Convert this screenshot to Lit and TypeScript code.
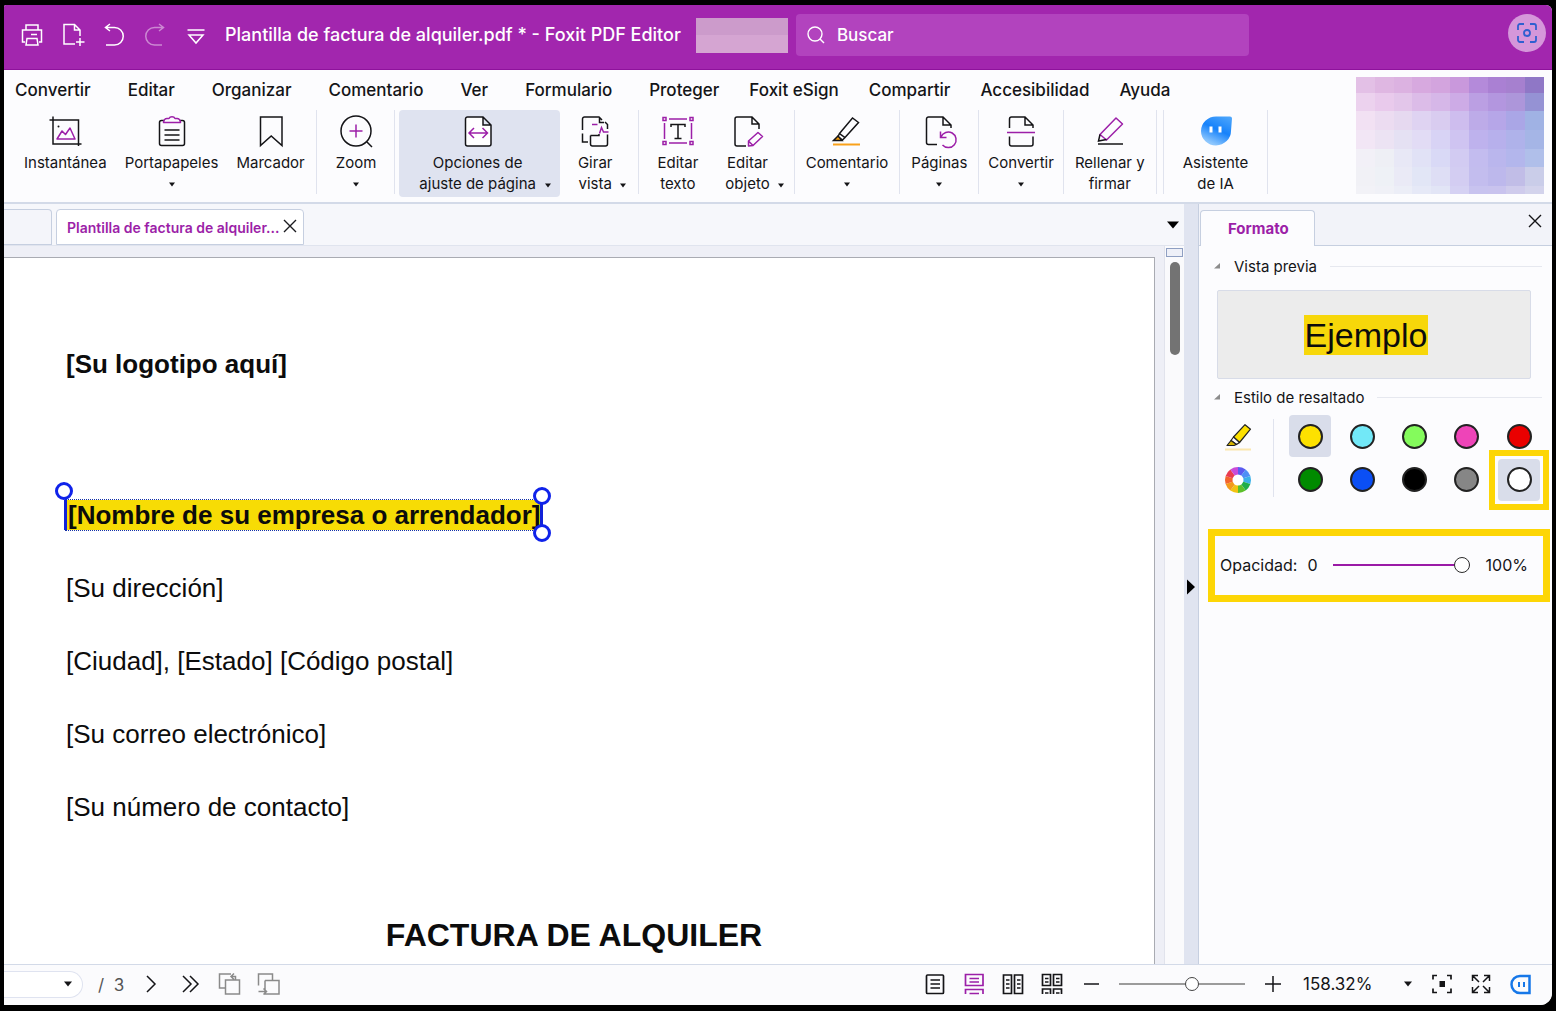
import { LitElement, html, css, svg, nothing } from "lit";
import { customElement, state } from "lit/decorators.js";
import { classMap } from "lit/directives/class-map.js";
import { styleMap } from "lit/directives/style-map.js";

const P = "#9c1fa8";

const icon = (content: unknown, size = 32) => html`<svg
  class="icon"
  width=${size}
  height=${size}
  viewBox="0 0 ${size} ${size}"
  fill="none"
  stroke="currentColor"
  stroke-width="1.5"
  aria-hidden="true"
>${content}</svg>`;

const caret = html`<svg class="caret" width="8" height="5" viewBox="0 0 8 5" aria-hidden="true"><path d="M1 .5h6L4 4.5z" fill="currentColor"/></svg>`;
const caretLarge = html`<svg class="caret" width="12" height="8" viewBox="0 0 12 8" aria-hidden="true"><path d="M0 .5h12L6 7.5z" fill="currentColor"/></svg>`;
const caretMid = html`<svg class="caret" width="8" height="6" viewBox="0 0 8 6" aria-hidden="true"><path d="M0 .5h8L4 5.5z" fill="currentColor"/></svg>`;
const cross = html`<svg width="14" height="14" viewBox="0 0 14 14" fill="none" stroke="currentColor" stroke-width="1.4" aria-hidden="true"><path d="M1 1l12 12M13 1L1 13"/></svg>`;

const quick = [
  { label: "Imprimir", art: svg`<path d="M6 7V2h12v5M5 19H2.500V7h19v12H19M7 15.500h10l1 6.500H6z M11 11.500h6"/>` },
  { label: "Nuevo", art: svg`<path d="M14 21H3V1.500h10.500L19 7v6M13.500 1.500V7H19M19 15v8M15 19h8.500"/>` },
  { label: "Deshacer", art: svg`<path d="M8 1L3.500 4.500 8 8M3.500 4.500h9a8.500 8.500 0 0 1 0 17.500H4"/>` },
  { label: "Rehacer", dim: true, art: svg`<path d="M16 1l4.500 3.500L16 8M20.500 4.500h-9a8.500 8.500 0 0 0 0 17.500H19"/>` },
  { label: "Personalizar", art: svg`<path d="M3.500 7h17M5 12h14l-7 8z"/>` },
];

const menus = ["Convertir", "Editar", "Organizar", "Comentario", "Ver", "Formulario", "Proteger", "Foxit eSign", "Compartir", "Accesibilidad", "Ayuda"];

interface Tool {
  lines: string[];
  art: unknown;
  caret?: "below" | "side";
  active?: boolean;
}

const groups: { kind: string; tools: Tool[] }[] = [
  {
    kind: "first",
    tools: [
      { lines: ["Instantánea"], art: svg`<path d="M.5 5h29v26M4 1.500V29h28.500"/><circle cx="9.500" cy="11.500" r="1" fill="currentColor" stroke="none"/><path stroke=${P} stroke-linejoin="round" d="M8 24l5-8 3.500 3.500L21 13l5 11z"/>` },
      { lines: ["Portapapeles"], caret: "below", art: svg`<path d="M8 5.500H5.500a2 2 0 0 0-2 2v21a2 2 0 0 0 2 2h21a2 2 0 0 0 2-2v-21a2 2 0 0 0-2-2H24M8.500 15h15M8.500 20h15M8.500 25h15"/><path stroke=${P} stroke-linejoin="round" d="M11 3.500h2a3.200 2.600 0 0 1 6 0h2q3 0 3.500 4H7.500q.5-4 3.500-4z"/>` },
      { lines: ["Marcador"], art: svg`<path d="M5.500 2H27v28.500l-10.800-9.500-10.700 9.500z"/>` },
    ],
  },
  { kind: "roomy", tools: [{ lines: ["Zoom"], caret: "below", art: svg`<circle cx="16" cy="16" r="15"/><path d="M27 27l5 5"/><path stroke=${P} d="M9.500 16h13M16 9.500v13"/>` }] },
  {
    kind: "tight",
    tools: [
      { lines: ["Opciones de", "ajuste de página"], caret: "side", active: true, art: svg`<path fill="#fff" d="M3.500 4a2 2 0 0 1 2-2H21l8 8v19a2 2 0 0 1-2 2H5.500a2 2 0 0 1-2-2zM21 2v8h8"/><path stroke=${P} d="M7.500 18h17M12 13l-5 5 5 5M20.500 13l5 5-5 5"/>` },
      { lines: ["Girar", "vista"], caret: "side", art: svg`<path d="M3.500 15V4a2 2 0 0 1 2-2H20l3 3M26 7l2.500 2.500V14M20.500 2v5.500H25M3.500 18.500V27H9M11.500 20.500h8.500V19M11.500 20.500V29a2 2 0 0 0 2 2h13a2 2 0 0 0 2-2V19.500"/><path stroke=${P} d="M13 9.500h5.500M20.500 18.500l2-6 2 4.500h5"/>` },
    ],
  },
  {
    kind: "wide",
    tools: [
      { lines: ["Editar", "texto"], art: svg`<path stroke=${P} d="M7 4h18M7 28h18M2.500 8v16M29.500 8v16M1 2.500h3v3H1zM28 2.500h3v3h-3zM1 26.500h3v3H1zM28 26.500h3v3h-3z"/><path d="M9 12V9.500h14V12M16 9.500v14M12.500 23.500h7"/>` },
      { lines: ["Editar", "objeto"], caret: "side", art: svg`<path d="M14 31H5a2 2 0 0 1-2-2V4a2 2 0 0 1 2-2h15l7 7v5M20 2v7h7"/><path stroke=${P} stroke-linejoin="round" d="M16.500 26L26 17.500l4.500 4-9.500 9-4.500.5zM16.500 26l4.500 4.500"/>` },
    ],
  },
  { kind: "plain", tools: [{ lines: ["Comentario"], caret: "below", art: svg`<path d="M8.500 18.500L21.500 3l6 4.500L14 22.500zM8.500 18.500L7 21.500l4.500 3.500 2.500-2.500"/><path d="M7 21l-4.500 4.500h8.500z" fill="#f59e0b"/><path d="M2 29.500h27" stroke="#f9a11b" stroke-width="2"/>` }] },
  { kind: "plain", tools: [{ lines: ["Páginas"], caret: "below", art: svg`<path d="M14 29.500H5.500a2 2 0 0 1-2-2V4a2 2 0 0 1 2-2H20l8 8v3M20 2v8h8"/><path stroke=${P} d="M17.500 16.500v6h6M18 22a7.800 7.800 0 1 1 1.500 8"/>` }] },
  { kind: "snug", tools: [{ lines: ["Convertir"], caret: "below", art: svg`<path d="M4.500 13V4a2 2 0 0 1 2-2H20l8 8v3M20 2v8h8M4.500 21.500V29a2 2 0 0 0 2 2H26a2 2 0 0 0 2-2v-7.500"/><path stroke=${P} d="M2 17.500h28"/>` }] },
  { kind: "plain", tools: [{ lines: ["Rellenar y", "firmar"], art: svg`<path stroke=${P} stroke-linejoin="round" d="M6 19.500L22 3l6.500 6L12.500 25z"/><path d="M6 19.500L4.500 26l8-1.500M4 29h25"/>` }] },
  {
    kind: "assistant",
    tools: [{ lines: ["Asistente", "de IA"], art: svg`<defs><linearGradient id="drop" x1="1" y1="0" x2="0.500" y2="1"><stop offset="0" stop-color="#52a9fb"/><stop offset=".55" stop-color="#1682fb"/><stop offset="1" stop-color="#8cc6fd"/></linearGradient></defs><path fill="url(#drop)" stroke="none" d="M16 1.500h14q2 0 2 2L31 16A15.500 14.500 0 0 1 16 30.500 15 14.500 0 0 1 1 16 15 14.500 0 0 1 16 1.500z"/><path stroke="#fff" stroke-width="3" d="M11 11.500v6M20 11.500v6"/>` }],
  },
];

const mosaicRows = [
  "e3c0e6 dfb7e2 dcb2e1 d7a9df d3a4de c998dc b48ada aa80d3 a680cf 8f77c6",
  "ecd2ee e9caec e3c6ea dcbce8 d6b7e8 cdabe6 bb9fe3 b396df ad96da 9592d4",
  "f2e1f3 ecdcf1 e6d9f0 dfd3f2 d9ccf0 cebdee bdabe8 b6a6e8 aaa6e6 a0b2e4",
  "f2e6f5 ece3f3 e5e1f3 e2dcf5 d8d3f5 cfc4f1 beb2ed b7b0ec afb2ea a5b5e6",
  "f2f0f7 eeeff5 e8e8f6 e1e2f6 d9d9f6 d2cbf2 c3bcef bab6ed b3b6ec b0bfea",
  "f1f1f6 eef1f6 eaeaf6 e2e6f6 dedef5 d3cdf2 c3bdee bdb8ec c1bde7 cacde9",
  "f2f2f7 f0f1f7 eceef7 e6e9f7 e2e5f6 d5d1f3 c8c3ef c9c3ee cfcbec d3d3ec",
].map((row) => row.split(" "));
const mosaicY = [0, 16, 34, 53, 72, 90, 109, 117];

const swatches = [
  { name: "Amarillo", color: "#fde100", on: true },
  { name: "Celeste", color: "#72e8f7" },
  { name: "Verde claro", color: "#84fb5c" },
  { name: "Rosa", color: "#ee44b8" },
  { name: "Rojo", color: "#ea0000" },
  { name: "Verde", color: "#008a00" },
  { name: "Azul", color: "#0b4ff5" },
  { name: "Negro", color: "#000000" },
  { name: "Gris", color: "#868686" },
  { name: "Blanco", color: "#ffffff", on: true, marked: true },
];

const wheel = ["#5a5bf0", "#4f8ff5", "#3bb0e8", "#1fae4a", "#5cc02a", "#f2c211", "#f39a1b", "#f2642c", "#ea3c4f", "#c94bd8"];

@customElement("app-root")
export class AppRoot extends LitElement {
  @state() private opacity = 100;
  @state() private zoom = 59;

  static styles = css`
    :host {
      display: block;
      font-family: Inter, "Liberation Sans", sans-serif;
      color: #141417;
      --accent: #9c1fa8;
      --line: #d3dae8;
    }
    *, *::before, *::after { box-sizing: border-box; }
    button, input, select {
      font: inherit;
      color: inherit;
      background: none;
      border: 0;
      padding: 0;
      margin: 0;
      appearance: none;
    }
    svg { display: block; overflow: visible; flex: none; }
    .screen { background: #000; padding: 5px 4px 6px; height: 100vh; min-height: 640px; }
    .window {
      height: 100%;
      display: flex;
      flex-direction: column;
      overflow: hidden;
      background: #fcfcfe;
      border-radius: 2px 6px 12px 0;
    }

    .titlebar {
      flex: none;
      display: flex;
      align-items: center;
      height: 65px;
      padding: 0 6px 4px 16px;
      background: #a226ae;
      border-bottom: 1px solid #8e129c;
      color: #fff;
    }
    .quick { display: flex; gap: 17px; margin-right: 17px; }
    .quick button { display: block; }
    .quick .dim { opacity: 0.45; }
    .title { margin: 0; font-size: 18px; font-weight: 500; line-height: 24px; white-space: nowrap; }
    .blank { width: 92px; height: 35px; margin: 0 8px 0 15px; background: linear-gradient(#cc9bcb 48%, #d5a5d2 48%); }
    .search {
      display: flex;
      align-items: center;
      gap: 12px;
      flex: 0 1 453px;
      height: 42px;
      padding: 0 11px;
      border-radius: 4px;
      background: #b243be;
    }
    .search input { flex: 1; min-width: 0; font-size: 17px; font-weight: 500; line-height: 24px; outline: none; }
    .search input::placeholder { color: #fff; opacity: 1; }
    .capture {
      display: grid;
      place-items: center;
      width: 38px;
      height: 38px;
      margin: 0 0 4px auto;
      border-radius: 50%;
      background: #d597da;
      color: #2f5fd0;
    }

    .ribbon {
      flex: none;
      display: flex;
      justify-content: space-between;
      padding: 7px 8px 5px 0;
      border-bottom: 2px solid var(--line);
    }
    .menus { display: flex; gap: 30px; padding-left: 11px; height: 26px; }
    .menus button { font-size: 17px; font-weight: 500; line-height: 25px; white-space: nowrap; }
    .menus button:nth-child(-n + 6) { margin-right: 7px; }
    .tools { display: flex; padding-top: 7px; height: 94px; }
    .group { display: flex; padding: 0 2px; border-right: 1px solid #e0e3ee; height: 84px; }
    .group.first { padding-left: 11px; }
    .group.roomy { padding: 0 9px 0 10px; }
    .group.tight { padding: 0 4px; }
    .group.wide { padding-left: 9px; }
    .group.snug { padding: 0; }
    .group.assistant { margin-left: 6px; padding: 0 10px; border-left: 1px solid #e0e3ee; }
    .tool {
      display: grid;
      grid-template-columns: auto;
      grid-template-rows: 32px auto 1fr;
      justify-items: center;
      align-content: start;
      row-gap: 5px;
      padding: 5px 9px 0;
      height: 87px;
      border-radius: 4px;
      font-size: 15px;
      line-height: 21px;
      white-space: nowrap;
    }
    .tool .label { text-align: center; }
    .tool .caret { margin-top: 4px; }
    .tool.side { grid-template-columns: 18px auto 22px; padding: 5px 0 0; }
    .tool.side .icon, .tool.side .label { grid-column: 2; }
    .tool.side .caret { grid-column: 3; grid-row: 2; align-self: end; margin-bottom: 6px; }
    .tool.active { background: #dfe3f0; grid-template-columns: 20px auto 24px; }

    .main { flex: 1; display: flex; min-height: 0; }
    .viewer { flex: 1; min-width: 0; display: flex; flex-direction: column; background: #f1f2f8; }
    .tabs {
      flex: none;
      display: flex;
      align-items: flex-end;
      gap: 4px;
      height: 42px;
      padding-right: 5px;
      border-bottom: 1px solid #e0e4ee;
      background: #f6f7fb;
    }
    .tab {
      display: flex;
      align-items: center;
      gap: 4px;
      height: 36px;
      padding: 0 6px 0 10px;
      border: 1px solid #c6cfe0;
      border-radius: 4px 4px 0 0;
      background: #fff;
      color: var(--accent);
      font-size: 14px;
      font-weight: 600;
      white-space: nowrap;
    }
    .tab.stub { width: 48px; border-left: 0; border-radius: 0 4px 0 0; background: #f4f5fa; }
    .tab button { color: #1b1b1f; display: block; padding-bottom: 2px; }
    .more { margin-left: auto; align-self: center; color: #000; }
    .canvas { flex: 1; display: flex; min-height: 0; }
    .scroll { flex: 1; min-width: 0; padding: 11px 9px 0 0; background: #eeeff6; overflow: hidden; }
    .paper {
      height: 100%;
      overflow: hidden;
      padding: 91px 72px 0 62px;
      background: #fff;
      border-top: 1px solid #a9abb2;
      border-right: 1px solid #a9abb2;
      font-family: "Liberation Sans", Arial, sans-serif;
      font-size: 26px;
      line-height: 30px;
      color: #0c0c0c;
    }
    .paper p { margin: 0 0 43px; }
    .paper .logo { font-weight: 700; margin-bottom: 121px; }
    .paper h1 { margin: 95px 0 0; font-size: 32px; line-height: 36px; font-weight: 700; text-align: center; }
    .paper .picked { font-weight: 700; }
    .mark {
      position: relative;
      display: inline-block;
      padding: 0 0 0 2px;
      background: #f7dc05;
      outline: 1px dotted #1430a8;
    }
    .mark::before, .mark::after { content: ""; position: absolute; top: 0; bottom: 0; width: 3px; background: #1122d8; }
    .mark::before { left: -2px; }
    .mark::after { right: -3px; }
    .grip { position: absolute; z-index: 1; width: 18px; height: 18px; border: 3px solid #0f22ea; border-radius: 50%; background: #fff; }
    .grip.start { left: -11px; top: -18px; }
    .grip.top { right: -11px; top: -13px; }
    .grip.end { right: -11px; bottom: -12px; }

    .track { flex: none; width: 20px; padding: 2px 1px; background: #fafafc; border-left: 1px solid #e1e3ec; }
    .split { height: 9px; border: 1px solid #8f9fc2; background: #eef0f8; }
    .thumb { width: 10px; height: 93px; margin: 5px auto 0; border-radius: 5px; background: #737373; }
    .divider { flex: none; width: 15px; display: grid; place-items: center; padding-top: 5px; background: #e0e4f0; border-right: 1px solid #c6cfe0; color: #000; }

    .panel { flex: none; width: 353px; background: #fcfcfe; }
    .panel-head {
      display: flex;
      align-items: flex-end;
      justify-content: space-between;
      height: 42px;
      margin-bottom: 10px;
      padding: 0 10px 0 1px;
      background: linear-gradient(#c6cfe0, #c6cfe0) bottom / 100% 1px no-repeat #f2f3f9;
    }
    .panel-tab {
      height: 36px;
      padding: 0 25px 0 27px;
      border: 1px solid #c6cfe0;
      border-bottom: 0;
      border-radius: 4px 4px 0 0;
      background: #fcfcfe;
      color: var(--accent);
      font-size: 15px;
      font-weight: 700;
    }
    .close { padding-bottom: 18px; }
    .section { display: flex; align-items: center; gap: 13px; margin: 0; height: 20px; padding: 0 10px 0 15px; font-size: 15px; font-weight: 400; }
    .section::after { content: ""; flex: 1; height: 1px; background: #e6e8ef; }
    .preview {
      display: grid;
      place-items: center;
      height: 89px;
      margin: 14px 21px 8px 18px;
      padding-right: 16px;
      border: 1px solid #d8dce8;
      border-radius: 2px;
      background: #ececec;
      font-family: "Liberation Sans", Arial, sans-serif;
      font-size: 34px;
      line-height: 40px;
    }
    .preview mark { padding: 0 1px; background: #f7d70a; color: #0c0c0c; }
    .highlight { display: flex; padding: 8px 12px 0 26px; }
    .kinds { display: grid; row-gap: 1px; width: 49px; border-right: 1px solid #e0e3ee; height: 78px; margin: 4px 15px 4px 0; align-content: center; }
    .kinds button { display: grid; align-items: center; height: 42px; }
    .swatches { flex: 1; display: grid; grid-template-columns: repeat(5, 42px); justify-content: space-between; row-gap: 1px; }
    .swatch { position: relative; display: grid; place-items: center; height: 42px; border-radius: 4px; }
    .swatch.on { background: #d9ddea; }
    .swatch.marked::after { content: ""; position: absolute; inset: -9px; border: 6px solid #fdd606; }
    .dot { width: 25px; height: 25px; border: 2px solid #222; border-radius: 50%; }
    .opacity {
      display: flex;
      align-items: center;
      height: 73px;
      margin: 28px 2px 0 9px;
      padding: 0 15px 2px 5px;
      border: 7px solid #fdd606;
      font-size: 16px;
    }
    .opacity label { margin-right: 10px; }
    .opacity input { flex: 1; min-width: 0; margin: 0 16px; }

    .range { height: 18px; background: linear-gradient(var(--bar), var(--bar)) center / 100% var(--thick) no-repeat; }
    .range::-webkit-slider-thumb { appearance: none; width: 16px; height: 16px; border: 1px solid #2b2b2b; border-radius: 50%; background: #fff; }
    .range.violet { --bar: #9a1aa6; --thick: 2px; }
    .range.grey { --bar: #9b9b9b; --thick: 2px; width: 126px; }
    .range.grey::-webkit-slider-thumb { width: 14px; height: 14px; border-color: #444; }

    .status {
      flex: none;
      display: flex;
      align-items: center;
      height: 41px;
      padding: 0 20px 2px 0;
      border-top: 1px solid var(--line);
      background: #fbfbfd;
    }
    .pager { position: relative; display: flex; align-items: center; margin-right: 15px; }
    .pager select { width: 79px; height: 27px; border: 1px solid #dfe3f0; border-left: 0; border-radius: 0 14px 14px 0; background: #fff; }
    .pager .caret { position: absolute; right: 11px; pointer-events: none; }
    .total { font-size: 17px; line-height: 24px; padding-top: 2px; color: #555; margin-right: 16px; white-space: pre; }
    .nav { display: flex; gap: 15px; }
    .nav .faint { color: #8a8a8a; }
    .views { display: flex; align-items: center; gap: 15px; margin-left: auto; }
    .views .on { color: var(--accent); }
    .zoombar { display: flex; align-items: center; gap: 16px; margin-left: 15px; }
    .percent { position: relative; display: flex; align-items: center; margin: 0 17px 0 18px; }
    .percent select { width: 110px; font-size: 17px; line-height: 24px; }
    .percent .caret { position: absolute; right: 1px; pointer-events: none; }
    .tail { display: flex; gap: 15px; }
    .status button { display: block; }
  `;

  private renderTool(t: Tool) {
    return html`<button class=${classMap({ tool: true, side: t.caret === "side", active: !!t.active })}>
      ${icon(t.art)}
      <span class="label">${t.lines.map((l, i) => html`${i ? html`<br />` : nothing}${l}`)}</span>
      ${t.caret ? caret : nothing}
    </button>`;
  }

  private renderMosaic() {
    return html`<svg width="188" height="117" viewBox="0 0 188 117" shape-rendering="crispEdges" aria-hidden="true">
      ${mosaicRows.map((row, r) =>
        row.map((c, i) => {
          const x = Math.round(i * 18.8);
          return svg`<rect x=${x} y=${mosaicY[r]} width=${Math.round((i + 1) * 18.8) - x} height=${mosaicY[r + 1] - mosaicY[r]} fill=${"#" + c} />`;
        })
      )}
    </svg>`;
  }

  private renderWheel() {
    const n = wheel.length;
    const at = (k: number) => {
      const a = (k / n) * Math.PI * 2 - Math.PI / 2;
      return `${13 + 13 * Math.cos(a)} ${13 + 13 * Math.sin(a)}`;
    };
    return html`<svg width="26" height="26" viewBox="0 0 26 26" aria-hidden="true">
      ${wheel.map((c, k) => svg`<path d="M13 13L${at(k)}A13 13 0 0 1 ${at(k + 1)}z" fill=${c} />`)}
      <circle cx="13" cy="13" r="5.500" fill="#fff" />
    </svg>`;
  }

  private renderStatusIcon(label: string, art: unknown, cls = "") {
    return html`<button class=${cls} aria-label=${label}>${icon(art, 24)}</button>`;
  }

  render() {
    return html`<div class="screen"><div class="window">
      <header class="titlebar">
        <div class="quick">
          ${quick.map((q) => html`<button class=${q.dim ? "dim" : ""} aria-label=${q.label}>${icon(q.art, 24)}</button>`)}
        </div>
        <h1 class="title">Plantilla de factura de alquiler.pdf * - Foxit PDF Editor</h1>
        <div class="blank"></div>
        <div class="search">
          <svg width="18" height="18" viewBox="0 0 18 18" fill="none" stroke="currentColor" stroke-width="1.400" aria-hidden="true"><circle cx="8" cy="8" r="7"/><path d="M13 13l4 4"/></svg>
          <input type="search" aria-label="Buscar" placeholder="Buscar" />
        </div>
        <button class="capture" aria-label="Capturar">
          <svg width="20" height="20" viewBox="0 0 20 20" fill="none" stroke="currentColor" stroke-width="1.800" aria-hidden="true"><path d="M1 7V3a2 2 0 0 1 2-2h4M13 1h4a2 2 0 0 1 2 2v4M19 13v4a2 2 0 0 1-2 2h-4M7 19H3a2 2 0 0 1-2-2v-4"/><circle cx="10" cy="10" r="3"/></svg>
        </button>
      </header>

      <section class="ribbon">
        <div>
          <nav class="menus">${menus.map((m) => html`<button>${m}</button>`)}</nav>
          <div class="tools">
            ${groups.map((g) => html`<div class="group ${g.kind}">${g.tools.map((t) => this.renderTool(t))}</div>`)}
          </div>
        </div>
        ${this.renderMosaic()}
      </section>

      <div class="main">
        <section class="viewer">
          <div class="tabs">
            <div class="tab stub"></div>
            <div class="tab"><span>Plantilla de factura de alquiler...</span><button aria-label="Cerrar documento">${cross}</button></div>
            <button class="more" aria-label="Más documentos">${caretLarge}</button>
          </div>
          <div class="canvas">
            <div class="scroll">
              <article class="paper">
                <p class="logo">[Su logotipo aquí]</p>
                <p class="picked"><span class="mark">[Nombre de su empresa o arrendador]<i class="grip start"></i><i class="grip top"></i><i class="grip end"></i></span></p>
                <p>[Su dirección]</p>
                <p>[Ciudad], [Estado] [Código postal]</p>
                <p>[Su correo electrónico]</p>
                <p>[Su número de contacto]</p>
                <h1>FACTURA DE ALQUILER</h1>
              </article>
            </div>
            <div class="track"><div class="split"></div><div class="thumb"></div></div>
          </div>
        </section>
        <button class="divider" aria-label="Contraer panel">
          <svg width="8" height="16" viewBox="0 0 8 16" aria-hidden="true"><path d="M0 .5v15L8 8z" fill="currentColor"/></svg>
        </button>
        <aside class="panel">
          <div class="panel-head">
            <button class="panel-tab">Formato</button>
            <button class="close" aria-label="Cerrar panel">${cross}</button>
          </div>
          <h2 class="section"><svg width="7" height="6" viewBox="0 0 7 6" aria-hidden="true"><path d="M6 0v5.500H0z" fill="#8c8c8c"/></svg>Vista previa</h2>
          <div class="preview"><mark>Ejemplo</mark></div>
          <h2 class="section"><svg width="7" height="6" viewBox="0 0 7 6" aria-hidden="true"><path d="M6 0v5.500H0z" fill="#8c8c8c"/></svg>Estilo de resaltado</h2>
          <div class="highlight">
            <div class="kinds">
              <button aria-label="Resaltador">
                <svg width="26" height="26" viewBox="0 0 26 26" stroke="#222" stroke-width="1.200" stroke-linejoin="round" aria-hidden="true"><path d="M8.500 13L20 .7l5.500 4.500L14.500 18.500z" fill="#fde100"/><path d="M8.500 13L6 16.500l5.500 4 3-2z" fill="#fff"/><path d="M6 16.500L2 21.500h7l2.500-1z" fill="#d7b400"/><path d="M0 25.500h26" stroke="#fbe7ad" stroke-width="2"/></svg>
              </button>
              <button aria-label="Más colores">${this.renderWheel()}</button>
            </div>
            <div class="swatches">
              ${swatches.map((s) => html`<button class=${classMap({ swatch: true, on: !!s.on, marked: !!s.marked })} aria-label=${s.name}><span class="dot" style=${styleMap({ background: s.color })}></span></button>`)}
            </div>
          </div>
          <div class="opacity">
            <label for="opacity">Opacidad:</label><span>0</span>
            <input id="opacity" class="range violet" type="range" min="0" max="100" .value=${String(this.opacity)} @input=${(e: Event) => (this.opacity = +(e.target as HTMLInputElement).value)} />
            <output for="opacity">${this.opacity}%</output>
          </div>
        </aside>
      </div>

      <footer class="status">
        <div class="pager"><select aria-label="Página"><option></option></select>${caretMid}</div>
        <span class="total">/  3</span>
        <div class="nav">
          ${this.renderStatusIcon("Página siguiente", svg`<path d="M7 4l8 8-8 8"/>`)}
          ${this.renderStatusIcon("Última página", svg`<path d="M4 4l8 8-8 8M11 4l8 8-8 8"/>`)}
          ${this.renderStatusIcon("Vista anterior", svg`<path d="M8 16H1.500V2H13M17.500 8V4.500H13M16 1.500l-3 3 3 3M7.500 8h14v14h-14z"/>`, "faint")}
          ${this.renderStatusIcon("Vista posterior", svg`<path d="M1.500 13.500V2h14v6M8 8.500h14V22H8V8.500M1.500 19.500h8M6.500 16.500l3 3-3 3"/>`, "faint")}
        </div>
        <div class="views">
          ${this.renderStatusIcon("Una página", svg`<rect x="3.500" y="3" width="17" height="18.500" rx="1" stroke-width="1.700"/><path d="M7.500 8h9.500M7.500 12h9.500M7.500 16h9.500"/>`)}
          ${this.renderStatusIcon("Continua", svg`<path stroke-width="1.700" d="M3.500 2.500h17.500v11H3.500zM3.500 22v-4.500h17.500V22"/><path d="M7.500 6.500h9.500M7.500 10h9.500M7.500 21.500h9.500"/>`, "on")}
          ${this.renderStatusIcon("Dos páginas", svg`<path stroke-width="1.700" d="M2.500 3h8v18.500h-8zM13.500 3h8v18.500h-8z"/><path d="M5 8h3.500M5 12h3.500M5 16h3.500M16 8h3.500M16 12h3.500M16 16h3.500"/>`)}
          ${this.renderStatusIcon("Dos páginas continuas", svg`<path stroke-width="1.700" d="M2.500 2.500h8v11h-8zM13.500 2.500h8v11h-8zM2.500 22v-5h8v5M13.500 22v-5h8v5"/><path d="M5 6.500h3.500M5 10h3.500M16 6.500h3.500M16 10h3.500M5 21h3.500M16 21h3.500"/>`)}
        </div>
        <div class="zoombar">
          ${this.renderStatusIcon("Alejar", svg`<path d="M5 12h15"/>`)}
          <input class="range grey" type="range" aria-label="Zoom" min="0" max="100" .value=${String(this.zoom)} @input=${(e: Event) => (this.zoom = +(e.target as HTMLInputElement).value)} />
          ${this.renderStatusIcon("Acercar", svg`<path d="M4 12h16M12 4v16"/>`)}
        </div>
        <div class="percent"><select aria-label="Porcentaje de zoom"><option>158.32%</option></select>${caretMid}</div>
        <div class="tail">
          ${this.renderStatusIcon("Ajustar", svg`<path stroke-width="1.700" d="M3 7.500V3.500h4M17 3.500h4v4M21 16.500v4h-4M7 20.500H3v-4"/><path fill="currentColor" stroke="none" d="M9.500 9h5.500v6H9.500z"/>`)}
          ${this.renderStatusIcon("Pantalla completa", svg`<path d="M3.500 9V3.500H9M3.500 3.500L10 10M15 3.500h5.500V9M20.500 3.500L14 10M3.500 15v5.500H9M3.500 20.500L10 14M15 20.500h5.500V15M20.500 20.500L14 14"/>`)}
          ${this.renderStatusIcon("Asistente", svg`<path stroke="#1677e8" stroke-width="2.500" d="M12 4h9.500v17H12a8.500 8.500 0 0 1 0-17z"/><path stroke="#1677e8" stroke-width="2" d="M11 10v5M16 10v5"/>`)}
        </div>
      </footer>
    </div></div>`;
  }
}
